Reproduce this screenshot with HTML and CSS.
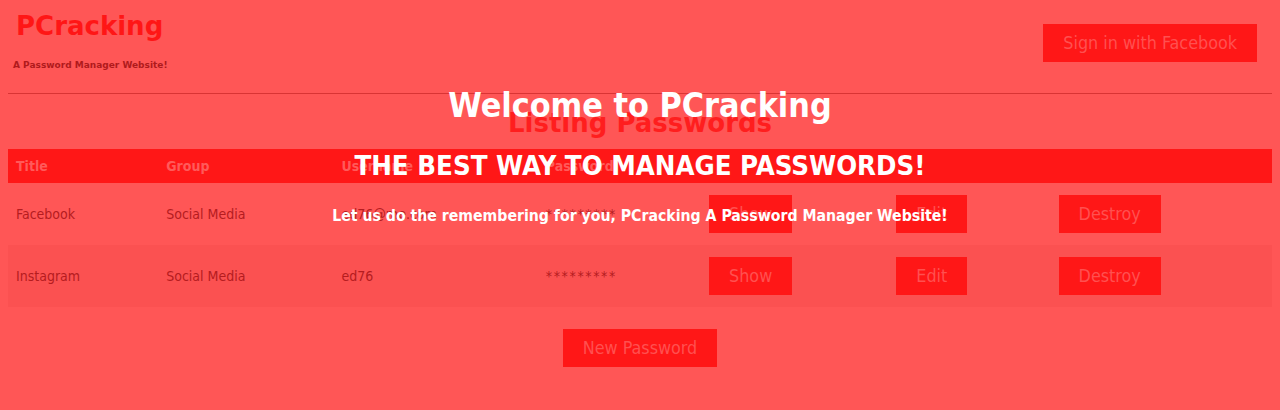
FILE: index.html
```html
<!DOCTYPE html>
<html>
<head>
<meta charset="utf-8">
<link rel="stylesheet" href="styles.css">
</head>
<body>
<header class="topbar">
  <div class="brand">
    <div class="brand-title">PCracking</div>
    <div class="brand-sub">A Password Manager Website!</div>
  </div>
  <a class="btn btn-fb">Sign in with Facebook</a>
</header>
<div class="rule"></div>
<h1 class="listing">Listing Passwords</h1>
<table class="pw-table">
  <colgroup>
    <col class="c1"><col class="c2"><col class="c3"><col class="c4"><col class="c5"><col class="c6"><col class="c7">
  </colgroup>
  <thead>
    <tr><th>Title</th><th>Group</th><th>Username</th><th>Password</th><th colspan="3"></th></tr>
  </thead>
  <tbody>
    <tr>
      <td>Facebook</td><td>Social Media</td><td>ed76@me.com</td><td class="stars">*********</td>
      <td><a class="btn">Show</a></td><td><a class="btn">Edit</a></td><td><a class="btn">Destroy</a></td>
    </tr>
    <tr class="alt">
      <td>Instagram</td><td>Social Media</td><td>ed76</td><td class="stars">*********</td>
      <td><a class="btn">Show</a></td><td><a class="btn">Edit</a></td><td><a class="btn">Destroy</a></td>
    </tr>
  </tbody>
</table>
<div class="actions"><a class="btn">New Password</a></div>

<div class="overlay">
  <div class="ov-title">Welcome to PCracking</div>
  <div class="ov-sub">THE BEST WAY TO MANAGE PASSWORDS!</div>
  <div class="ov-text">Let us do the remembering for you, PCracking A Password Manager Website!</div>
</div>
</body>
</html>
```
FILE: styles.css
```css
html, body {
  margin: 0;
  padding: 0;
  background: #ff5656;
  height: 100%;
  overflow: hidden;
}
body {
  padding: 0 8px;
  font-family: "DejaVu Sans Condensed", "DejaVu Sans", sans-serif;
  color: #b51c1f;
  position: relative;
}
.topbar {
  display: flex;
  justify-content: space-between;
  align-items: flex-start;
  height: 93px;
}
.brand {
  padding-top: 11px;
}
.brand-title {
  font-family: "DejaVu Sans", sans-serif;
  font-weight: bold;
  font-size: 26px;
  line-height: 30px;
  color: #ff1616;
  padding-left: 8px;
}
.brand-sub {
  font-family: "DejaVu Sans", sans-serif;
  font-weight: bold;
  font-size: 9px;
  line-height: 12px;
  margin-top: 18px;
  padding-left: 5px;
  color: #b01a1c;
}
.btn {
  display: inline-block;
  background: #ff1717;
  color: #ff5050;
  font-size: 17.8px;
  line-height: 38px;
  padding: 0 20px;
  text-decoration: none;
}
.btn-fb {
  margin-top: 24px;
  margin-right: 15px;
}
.rule {
  height: 1px;
  background: #d93434;
}
.listing {
  font-family: "DejaVu Sans", sans-serif;
  margin: 8px 0 5px;
  text-align: center;
  font-size: 26px;
  line-height: 42px;
  color: #ff1e1e;
}
.pw-table {
  width: 100%;
  border-collapse: collapse;
  table-layout: fixed;
}
.c1 { width: 150px; }
.c2 { width: 175px; }
.c3 { width: 204px; }
.c4 { width: 163px; }
.c5 { width: 187px; }
.c6 { width: 162px; }
.c7 { width: 221px; }
.pw-table thead tr {
  background: #ff1717;
}
.pw-table th {
  text-align: left;
  font-size: 14px;
  font-weight: bold;
  color: #ff5a5a;
  height: 34px;
  padding: 0 8px;
}
.pw-table td {
  font-size: 14px;
  height: 62px;
  padding: 0 8px;
  color: #b51c1f;
}
.pw-table td.stars {
  letter-spacing: 1.6px;
}
.pw-table tr.alt {
  background: #fb5151;
}
.actions {
  text-align: center;
  padding-top: 22px;
}
.overlay {
  position: absolute;
  top: 0;
  left: 0;
  right: 0;
  bottom: 0;
  text-align: center;
  color: #ffffff;
  font-family: "DejaVu Sans Condensed", "DejaVu Sans", sans-serif;
  font-weight: bold;
  padding-top: 86px;
}
.ov-title {
  font-size: 33.8px;
  line-height: 40px;
}
.ov-sub {
  font-size: 27.4px;
  line-height: 32px;
  margin-top: 24px;
}
.ov-text {
  font-size: 15.7px;
  line-height: 20px;
  margin-top: 24px;
}
```
